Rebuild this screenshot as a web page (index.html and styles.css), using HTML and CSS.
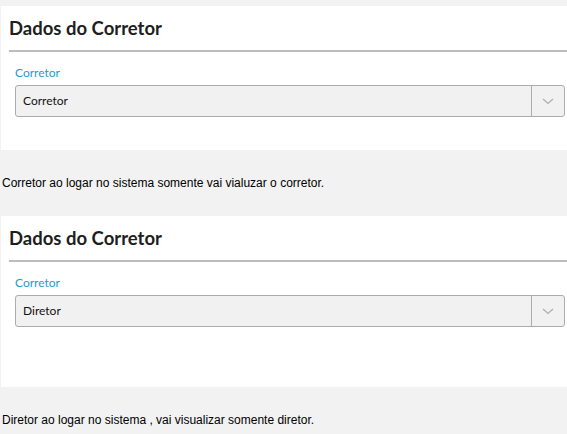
FILE: index.html
```html
<html>
<head>
<title>Dados do Corretor</title>
<link rel="stylesheet" href="styles.css">
</head>
<body>

<div class="panel">
  <h2 class="panel-title">Dados do Corretor</h2>
  <div class="field">
    <label class="field-label">Corretor</label>
    <div class="select">
      <span class="select-value">Corretor</span>
      <span class="select-arrow">
        <svg width="12" height="7" viewBox="0 0 12 7"><path d="M1 1 L6 5.5 L11 1" fill="none" stroke="#b0b0b0" stroke-width="1.3"/></svg>
      </span>
    </div>
  </div>
</div>

<p class="note">Corretor ao logar no sistema somente vai vialuzar o corretor.</p>

<div class="panel tall">
  <h2 class="panel-title">Dados do Corretor</h2>
  <div class="field">
    <label class="field-label">Corretor</label>
    <div class="select">
      <span class="select-value">Diretor</span>
      <span class="select-arrow">
        <svg width="12" height="7" viewBox="0 0 12 7"><path d="M1 1 L6 5.5 L11 1" fill="none" stroke="#b0b0b0" stroke-width="1.3"/></svg>
      </span>
    </div>
  </div>
</div>

<p class="note">Diretor ao logar no sistema , vai visualizar somente diretor.</p>

</body>
</html>
```

FILE: styles.css
```css
body { margin:0; background:#f2f2f2; font-family:Lato, "Open Sans", sans-serif; }
.panel { background:#fff; margin:6px 0 0 1px; height:144px; box-sizing:border-box; }
.panel.tall { margin-top:0; height:171px; }
.panel-title { margin:0 0 0 8px; padding:10px 0 10px 0; font-size:18.5px; line-height:24px; font-weight:bold; color:#1e1e1e; border-bottom:2px solid #bcbcbc; }
.field { padding:13px 2px 0 14px; }
.field-label { display:block; color:#1d9ccc; font-size:12px; line-height:16px; margin-bottom:4px; }
.select { display:flex; height:32px; box-sizing:border-box; background:#f1f1f1; border:1px solid #acacac; border-radius:3px; }
.select-value { flex:1; padding-left:7px; font-size:12px; line-height:30px; color:#111; }
.select-arrow { width:32px; border-left:1px solid #acacac; display:flex; align-items:center; justify-content:center; }
.note { margin:0 0 0 2px; height:66px; line-height:66px; font-family:"Liberation Sans", Arial, sans-serif; font-size:12px; color:#000; }
```
